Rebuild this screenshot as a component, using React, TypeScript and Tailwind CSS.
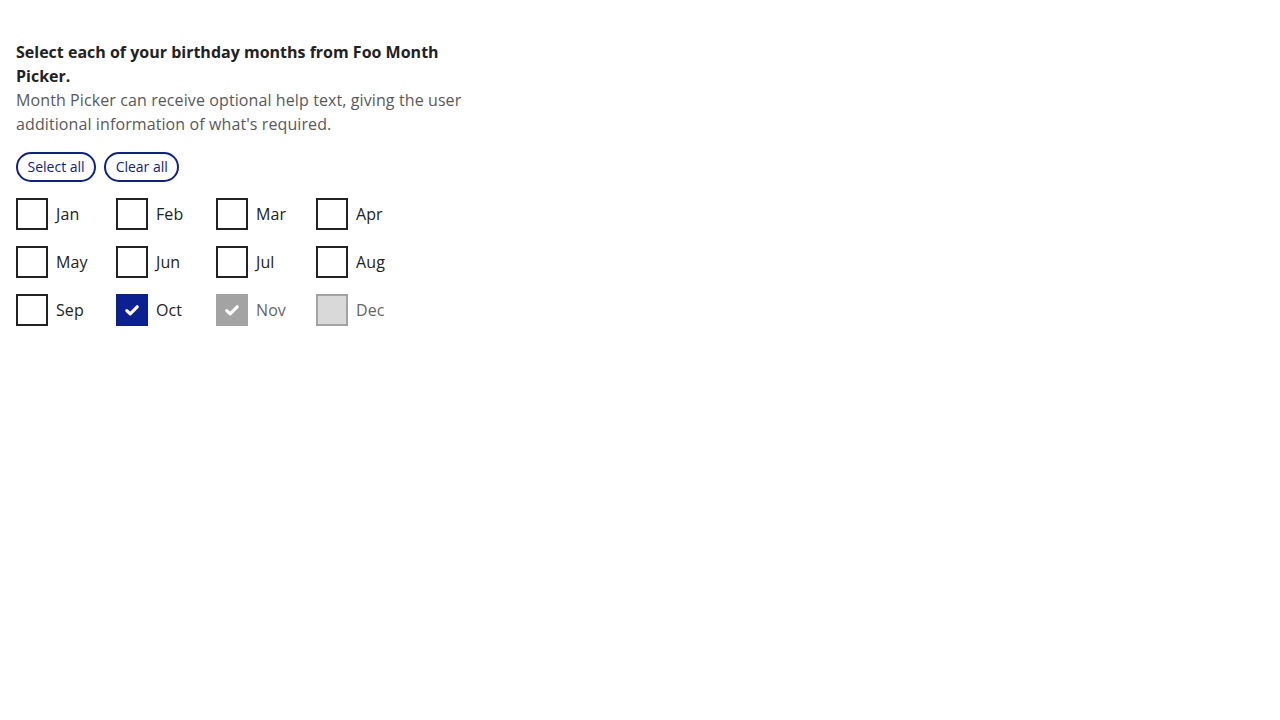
const months = [
  { name: "Jan" },
  { name: "Feb" },
  { name: "Mar" },
  { name: "Apr" },
  { name: "May" },
  { name: "Jun" },
  { name: "Jul" },
  { name: "Aug" },
  { name: "Sep" },
  { name: "Oct", checked: true },
  { name: "Nov", checked: true, disabled: true },
  { name: "Dec", disabled: true },
];

function Check() {
  return (
    <svg width="16" height="16" viewBox="0 0 16 16" fill="none">
      <path d="M2.8 8.6 L6.2 11.8 L13.2 4.8" stroke="white" strokeWidth="3.2" strokeLinecap="round" strokeLinejoin="round" />
    </svg>
  );
}

function MonthBox({ name, checked, disabled }: { name: string; checked?: boolean; disabled?: boolean }) {
  let box = "border-[#222222] bg-white";
  if (checked && !disabled) box = "border-[#0c2191] bg-[#0c2191]";
  if (checked && disabled) box = "border-[#a3a3a3] bg-[#a3a3a3]";
  if (!checked && disabled) box = "border-[#a3a3a3] bg-[#d9d9d9]";
  return (
    <label className="flex items-center gap-2">
      <span className={`w-8 h-8 border-2 flex items-center justify-center ${box}`}>
        {checked && <Check />}
      </span>
      <span className={`tracking-[0.1px] ${disabled ? "text-[#666666]" : "text-[#222222]"}`}>{name}</span>
    </label>
  );
}

export default function App() {
  return (
    <div className="min-h-screen bg-white px-4 pt-10 text-base leading-6 text-[#222222]" style={{ fontFamily: '"Open Sans", sans-serif' }}>
      <div className="w-[470px]">
        <p className="font-bold">Select each of your birthday months from Foo Month Picker.</p>
        <p className="text-[#595959] tracking-[0.1px]">Month Picker can receive optional help text, giving the user additional information of what's required.</p>
        <div className="flex gap-2 mt-4">
          <button className="h-[30px] px-[9.5px] rounded-full border-2 border-[#0c2191] text-[#0c2191] text-sm leading-5">Select all</button>
          <button className="h-[30px] px-[9.5px] rounded-full border-2 border-[#0c2191] text-[#0c2191] text-sm leading-5">Clear all</button>
        </div>
        <div className="grid grid-cols-[repeat(4,100px)] gap-y-4 mt-4">
          {months.map((m) => (
            <MonthBox key={m.name} {...m} />
          ))}
        </div>
      </div>
    </div>
  );
}
